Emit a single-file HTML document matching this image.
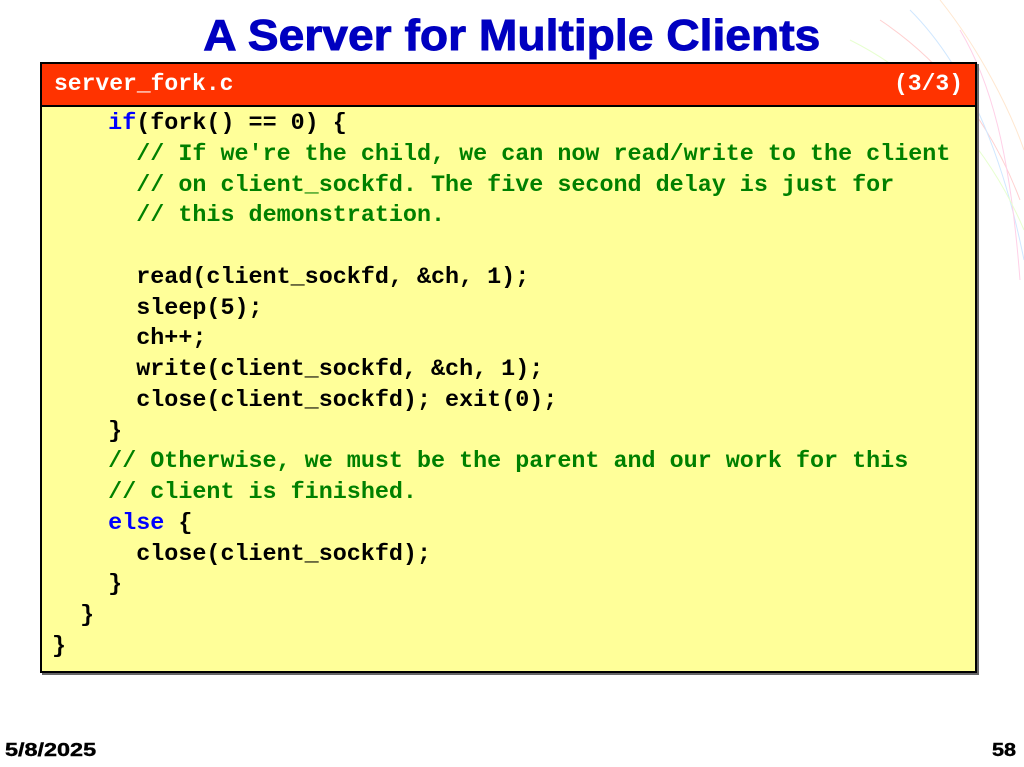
<!DOCTYPE html>
<html><head><meta charset="utf-8"><style>
body{margin:0;width:1024px;height:767px;background:#fff;position:relative;overflow:hidden;font-family:"Liberation Sans",sans-serif}
.title{position:absolute;top:11px;left:0;width:1024px;text-align:center;font-weight:bold;font-size:44px;color:#0000c0;line-height:50px}
.title span{display:inline-block;transform:scaleX(1.05);-webkit-text-stroke:0.9px #0000c0}
.box{position:absolute;left:40px;top:62px;width:933px;height:607px;border:2px solid #000;background:#ffff99;box-shadow:2px 2px 0 #666}
.hdr{height:41px;background:#ff3300;border-bottom:2px solid #000;color:#fff;font-family:"Liberation Mono",monospace;font-weight:bold;font-size:23px;line-height:41px;padding:0 12px;display:flex;justify-content:space-between}
pre{margin:0;position:absolute;left:10px;top:45px;font-family:"Liberation Mono",monospace;font-weight:bold;font-size:23.4px;line-height:30.75px;color:#000}
.c{color:#008000}.k{color:#0000ff}
.ft{position:absolute;top:740px;font-weight:bold;font-size:18px;-webkit-text-stroke:0.4px #000}
</style></head><body>
<svg style="position:absolute;left:820px;top:0" width="204" height="300"><g fill="none" stroke-width="1" opacity="0.45">
<path d="M60 20 C120 60 170 120 200 200" stroke="#f99"/><path d="M90 10 C140 60 180 140 204 260" stroke="#9cf"/><path d="M120 0 C160 50 190 110 204 150" stroke="#fc9"/><path d="M140 30 C170 80 190 150 200 280" stroke="#f9c"/><path d="M30 40 C110 80 170 150 204 230" stroke="#cf9"/></g></svg>
<div class="title"><span>A Server for Multiple Clients</span></div>
<div class="box"><div class="hdr"><span>server_fork.c</span><span>(3/3)</span></div>
<pre>    <span class="k">if</span>(fork() == 0) {
      <span class="c">// If we're the child, we can now read/write to the client</span>
      <span class="c">// on client_sockfd. The five second delay is just for</span>
      <span class="c">// this demonstration.</span>

      read(client_sockfd, &amp;ch, 1);
      sleep(5);
      ch++;
      write(client_sockfd, &amp;ch, 1);
      close(client_sockfd); exit(0);
    }
    <span class="c">// Otherwise, we must be the parent and our work for this</span>
    <span class="c">// client is finished.</span>
    <span class="k">else</span> {
      close(client_sockfd);
    }
  }
}</pre></div>
<div class="ft" style="left:5px;transform:scaleX(1.3);transform-origin:left">5/8/2025</div>
<div class="ft" style="right:8px;transform:scaleX(1.2);transform-origin:right">58</div>
</body></html>
